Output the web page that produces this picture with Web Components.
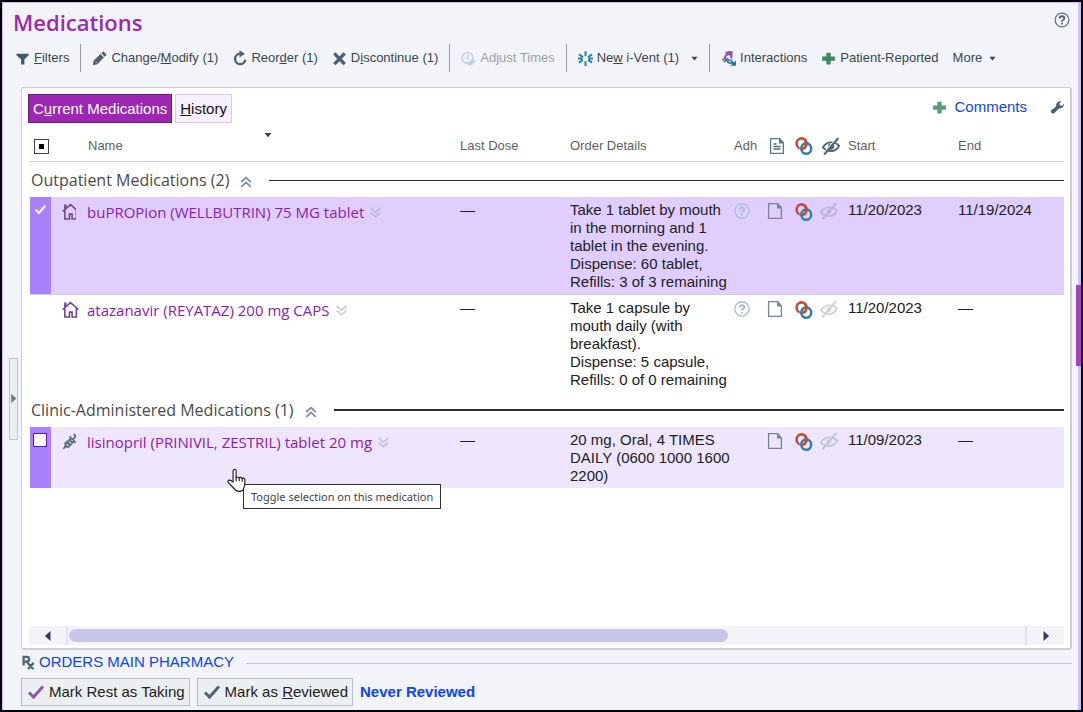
<!DOCTYPE html>
<html lang="en">
<head>
<meta charset="utf-8">
<title>Medications</title>
<style>
  html, body { margin: 0; height: 100%; }
  body { background: #000; font-family: "Liberation Sans", Arial, sans-serif; color: #212121; }
</style>
</head>
<body>
<med-app></med-app>
<script>
const ICONS = {
  filter: '<path fill="#455a6e" d="M1.500 3h13v1.500l-4.500 4.500v5.500H6.500V9L1.500 4.500z"/>',
  pencil: '<path fill="#4d6070" d="M.8 15.200l1-5L9 3.300 12.700 7l-7 7zM10 2.500l1.500-1.700q.5-.4 1 0L15.200 3.500q.4.500 0 1L13.500 6z"/><path stroke="#cfd6de" stroke-width=".8" d="M3.500 11l2 2"/>',
  reorder: '<path fill="none" stroke="#4d6478" stroke-width="2.600" d="M8.500 3a5.500 5.500 0 1 0 5.700 6.300"/><path fill="#4d6478" d="M8-.8l5.800 3.800L8 6.800z"/>',
  cross: '<path stroke="#4a6073" stroke-width="3.600" d="M2.500 2.500l11 11.500M13.500 2.500L2.500 14"/>',
  clock: '<circle cx="7" cy="7.500" r="5.800" fill="none" stroke="#ccd5df" stroke-width="2"/><path fill="none" stroke="#c0ccd8" stroke-width="1.300" d="M7.500 4v4H5"/><path fill="#b9d2e6" d="M7.500 15.500l.8-3.500 4-4 3.200 3-4 4z"/>',
  spark: '<path stroke="#2685ae" stroke-width="2.200" d="M8 .2v5M8 10.800V16M1 3.500L5.300 6.500M10.700 9.500L15 12.500M15 3.500L10.700 6.500M5.300 9.500L1 12.500M11 8h5M0 8h5"/>',
  interact: '<path fill="none" stroke="#8f55ad" stroke-width="2.200" d="M11 5a3.600 3.600 0 1 0-6 4.500q2 1 3.500-.5M5 2h4M11 0v8"/><path fill="#8f55ad" d="M4 2l4.500-2L12 0v5z"/><path fill="none" stroke="#3585ad" stroke-width="2" d="M7 7.500a3.200 3.200 0 1 0 5.500 4M8 10h4"/><path fill="none" stroke="#8f55ad" stroke-width="1.500" d="M1.500 8l3 4"/><path fill="#2078a5" d="M9.500 15.800H16V10l-2 2-2-1.500-1.500 2 1.500 1.500z"/>',
  plus: '<path fill="#3b8a62" d="M5.700 1.800h4.600v4h4.500v4.500h-4.500v4.200H5.700v-4.200H1.200V5.800h4.500z"/>',
  help: '<circle cx="8" cy="8" r="6.900" fill="none" stroke="#546e7a" stroke-width="1.200"/><path fill="none" stroke="#4d6478" stroke-width="1.900" d="M5.700 6.500q0-2.300 2.300-2.300t2.300 2q0 1.200-1.200 1.800T8 9.800M8 11v1.600"/>',
  adh: '<circle cx="8" cy="8" r="7.200" fill="none" stroke="#a9c2d4" stroke-width="1.400"/><path fill="none" stroke="#a9bfd0" stroke-width="2" d="M6 6.500q0-2.200 2-2.200t2.200 1.900q0 1.100-1.100 1.700T8 9.600M8 11v1.600"/>',
  wrench: '<path fill="#4d6070" d="M1 12l6-4.700Q6.500 4 8.500 2.500t4.500-1L10.800 4l.7 2.200 2.300.3L15.700 4q.5 2.500-1.200 4.200T10.300 9.800l-5.300 5q-1.200 1-2.800.2Q.2 13.500 1 12z"/>',
  note: '<path fill="#fff" stroke="#607786" stroke-width="1.300" d="M1.600.7h9l3.800 4v10.600H1.600z"/><path fill="#607786" d="M10 .5l4.800 5H10z"/><path stroke="#546e7a" stroke-width="1.300" d="M4.500 6h3M4.500 8.500h7M4.500 11h7"/>',
  page: '<path fill="none" stroke="#738696" stroke-width="1.300" d="M1.600.7h9l3.800 4v10.600H1.600z"/><path fill="#738696" d="M10 .5l4.800 5H10z"/>',
  links: '<ellipse cx="5.800" cy="5.800" rx="4.400" ry="4.600" fill="none" stroke="#c94b35" stroke-width="2.300"/><ellipse cx="10" cy="10.300" rx="4.400" ry="4.600" fill="none" stroke="#fff" stroke-opacity=".6" stroke-width="3.200"/><ellipse cx="10" cy="10.300" rx="4.400" ry="4.600" fill="none" stroke="#2f80ab" stroke-width="2.300"/><path fill="none" stroke="#c94b35" stroke-width="2.300" d="M8.500 2.200q2.600 2.500 1.300 5.500T6 10.400"/>',
  hidden: '<path fill="none" stroke="#526775" stroke-width="1.700" d="M.8 9.300Q3.500 4.800 8 4.800t7.200 3q-2.500 4.700-7 4.700T.8 9.300z"/><circle cx="8" cy="8.500" r="2.800" fill="#526775"/><path stroke="#fff" stroke-width="1" d="M1 14.500L13 1"/><path stroke="#526775" stroke-width="2" d="M2 15.500L14.500 1"/>',
  hiddenoff: '<g opacity=".42"><path fill="none" stroke="#8f97ab" stroke-width="1.700" d="M.8 9.300Q3.500 4.800 8 4.800t7.200 3q-2.500 4.700-7 4.700T.8 9.300z"/><circle cx="8" cy="8.500" r="2" fill="#8f97ab"/><path stroke="#8f97ab" stroke-width="1.900" d="M2 15.500L14.500 1"/></g>',
  home: '<path fill="none" stroke="#70448f" stroke-width="1.500" d="M.7 8L8 1.500 15.300 8M2.700 7v8H7v-4.500h2.500V15h4V7"/><path fill="#70448f" d="M2 1.500h2.300v3L2 6z"/>',
  syringe: '<path fill="#5b7280" d="M.3 15.800l2.200-4.600L2 9.500 8 4.500l3.800 3.800L6.500 14l-2-.3z"/><path fill="none" stroke="#5b7280" stroke-width="1.700" d="M7 3.200L13 9.200M10 6.200L13 3.200M11 1l4.200 4.200"/><path stroke="#d6dce8" stroke-width="1.100" d="M4.500 10.500L6 12M6.500 8L8.500 10M9 6.500l1 1"/>',
  up2: '<path fill="none" stroke="#7d8d9b" stroke-width="2" d="M2.500 8L8 3l5.500 5M2.500 13.500L8 8.500l5.500 5"/>',
  down2: '<path fill="none" stroke="#9aa3b8" stroke-opacity=".5" stroke-width="2.200" d="M2 2.500l6 5 6-5M2 8l6 5 6-5"/>',
  rx: '<path fill="none" stroke="#4d6478" stroke-width="2.600" d="M3 12V2.200H6.500q2.800 0 2.800 2.600T6.500 7.500H3M6 7.500l8 8.500M14.500 9l-6.500 7"/>',
  check: '<path fill="none" stroke="currentColor" stroke-width="3" d="M1 8.500L5.500 13 15 2.500"/>',
  down: '<path fill="#37474f" d="M1 4h14L8 12.500z"/>',
  right: '<path fill="#3a3858" d="M4 0l9 8-9 8z"/>',
  left: '<path fill="#3a3858" d="M12 0L3 8l9 8z"/>',
  handle: '<path fill="#757575" d="M4 0l9 8-9 8z"/>',
  hand: '<path fill="#fff" stroke="#1b1b26" stroke-width=".9" stroke-linejoin="round" d="M4.800 10.500V1.900Q4.800.6 6 .6T7.200 1.900v5.200q1.200-.9 2.400.3 1.200-.8 2.300.4 1.600-.5 2.200.9v3.800Q14 14 13 16l-.3 1.200Q9.500 19 6.800 17.200L1 11q-.7-1.500.6-1.800Q3 9 4.800 10.800z"/><path stroke="#1b1b26" stroke-width=".9" d="M7.200 7v3M9.600 7.500V10M12 8v2.500"/>'
};

class UiIcon extends HTMLElement {
  connectedCallback() {
    const name = this.getAttribute('name');
    const box = name === 'hand' ? '0 0 15 19' : '0 0 16 16';
    this.attachShadow({ mode: 'open' }).innerHTML = `
      <style>
        :host { display: inline-block; flex: none; width: var(--size, 16px); height: var(--size, 16px); }
        svg { display: block; width: 100%; height: 100%; overflow: visible; }
      </style>
      <svg viewBox="${box}" aria-hidden="true">${ICONS[name]}</svg>`;
  }
}
customElements.define('ui-icon', UiIcon);

class ToolButton extends HTMLElement {
  connectedCallback() {
    const icon = this.getAttribute('icon');
    this.attachShadow({ mode: 'open' }).innerHTML = `
      <style>
        :host { display: block; }
        button { display: flex; align-items: center; gap: 4px; padding: 0; border: 0; background: none;
          font: 13px/16px "Liberation Sans", Arial, sans-serif; color: #37474f; white-space: nowrap; }
        button:disabled { color: #a0a0a0; }
        .icon { --size: 15px; }
        .arrow { --size: 7px; margin-left: 3px; }
        .far .arrow { margin-left: 8px; }
      </style>
      <button ${this.hasAttribute('disabled') ? 'disabled' : ''} class="${this.getAttribute('menu') || ''}">
        ${icon ? `<ui-icon class="icon" name="${icon}"></ui-icon>` : ''}
        <span><slot></slot></span>
        ${this.hasAttribute('menu') ? '<ui-icon class="arrow" name="down"></ui-icon>' : ''}
      </button>`;
  }
}
customElements.define('tool-button', ToolButton);

class ToolBar extends HTMLElement {
  connectedCallback() {
    this.attachShadow({ mode: 'open' }).innerHTML = `
      <style>
        :host { display: flex; align-items: center; gap: 14px; height: 28px; padding-left: 12px; }
        ::slotted(hr) { width: 1px; height: 28px; margin: 0 -3px; border: 0; background: #9a9a9a; flex: none; }
      </style>
      <slot></slot>`;
  }
}
customElements.define('tool-bar', ToolBar);

class TabButton extends HTMLElement {
  connectedCallback() {
    this.attachShadow({ mode: 'open' }).innerHTML = `
      <style>
        :host { display: block; }
        button { height: 29px; padding: 0 4px; border: 1px solid #dfc4fa; background: #f9f0fd; color: #111;
          font: 15px/20px "Liberation Sans", Arial, sans-serif; white-space: nowrap; }
        :host([selected]) button { background: #9c27b0; border-color: #6a1b80; color: #fff; }
      </style>
      <button role="tab"><slot></slot></button>`;
  }
}
customElements.define('tab-button', TabButton);

class ToolTip extends HTMLElement {
  connectedCallback() {
    this.attachShadow({ mode: 'open' }).innerHTML = `
      <style>
        :host { display: block; box-sizing: border-box; height: 25px; padding: 0 7px; border: 1px solid #333;
          background: #fff; color: #444; font: 11px/23px "Noto Sans", "Open Sans", sans-serif; white-space: nowrap; }
      </style>
      <slot></slot>`;
  }
}
customElements.define('tool-tip', ToolTip);

const GROUPS = [
  { title: 'Outpatient Medications (2)', rows: [
    { state: 'selected', icon: 'home', name: 'buPROPion (WELLBUTRIN) 75 MG tablet', adh: true,
      details: ['Take 1 tablet by mouth in the morning and 1 tablet in the evening.', 'Dispense: 60 tablet, Refills: 3 of 3 remaining'],
      start: '11/20/2023', end: '11/19/2024' },
    { state: '', icon: 'home', name: 'atazanavir (REYATAZ) 200 mg CAPS', adh: true,
      details: ['Take 1 capsule by mouth daily (with breakfast).', 'Dispense: 5 capsule, Refills: 0 of 0 remaining'],
      start: '11/20/2023', end: '—' } ] },
  { title: 'Clinic-Administered Medications (1)', rows: [
    { state: 'hovered', icon: 'syringe', name: 'lisinopril (PRINIVIL, ZESTRIL) tablet 20 mg', adh: false,
      details: ['20 mg, Oral, 4 TIMES DAILY (0600 1000 1600 2200)'],
      start: '11/09/2023', end: '—' } ] }
];

class MedTable extends HTMLElement {
  connectedCallback() {
    const row = r => `
      <tr class="med ${r.state}">
        <td class="pick">${r.state ? `<input type="checkbox" aria-label="Select ${r.name}" ${r.state === 'selected' ? 'checked' : ''}>` : ''}${r.state === 'selected' ? '<ui-icon class="tick" name="check"></ui-icon>' : ''}</td>
        <td class="kind"><ui-icon name="${r.icon}"></ui-icon></td>
        <td class="name"><a href="#">${r.name}</a><ui-icon class="more" name="down2"></ui-icon>${r.state === 'hovered' ? '<ui-icon class="hand" name="hand"></ui-icon><tool-tip>Toggle selection on this medication</tool-tip>' : ''}</td>
        <td>—</td>
        <td>${r.details.map(d => `<div>${d}</div>`).join('')}</td>
        <td class="ico">${r.adh ? '<ui-icon name="adh"></ui-icon>' : ''}</td>
        <td class="ico"><ui-icon class="doc" name="page"></ui-icon></td>
        <td class="ico"><ui-icon class="links" name="links"></ui-icon></td>
        <td class="ico"><ui-icon class="eye" name="hiddenoff"></ui-icon></td>
        <td>${r.start}</td>
        <td>${r.end}</td>
      </tr>`;
    this.attachShadow({ mode: 'open' }).innerHTML = `
      <style>
        :host { display: block; }
        table { width: 100%; table-layout: fixed; border-collapse: separate; border-spacing: 0; }
        th, td { padding: 0; text-align: left; vertical-align: top; }
        thead th { height: 30px; vertical-align: middle; border-bottom: 1px solid #ccc; position: relative;
          font-size: 13px; line-height: 16px; font-weight: normal; color: #616161; }
        thead ui-icon { display: block; }
        .sort { position: absolute; left: 50%; top: 0; --size: 8px; margin-left: -4px; }
        tbody th { font-weight: normal; }
        .group { display: flex; align-items: center; height: 34px; margin-top: 1px; padding-left: 1px;
          font: 16px/20px "Open Sans", sans-serif; color: #4a4a4a; white-space: nowrap; }
        .group ui-icon { --size: 14px; margin: 3px 16px 0 10px; }
        .group i { flex: 1; height: 1px; background: #2b2b2b; }
        tbody + tbody .group { margin-top: 0; }
        tbody + tbody .group i { height: 2px; }
        .med td { padding: 4px 0 3px; border-bottom: 1px solid transparent; font-size: 15px; line-height: 18px; color: #212121; }
        .med.selected td { background: #dfceff; border-color: #cfcfdc; }
        .med.hovered td { background: #eee6ff; border-bottom: 0; }
        .med.selected .pick, .med.hovered .pick { background: #aa80ff; }
        .pick { position: relative; }
        input { appearance: none; display: block; box-sizing: border-box; width: 14px; height: 14px; margin: 2px 0 0 3px;
          border: 1px solid #5a14d8; background: #fff; }
        input:checked { border: 0; background: none; }
        .tick { position: absolute; left: 5px; top: 7px; --size: 11px; color: #fff; }
        #all { width: 15px; height: 15px; margin: 0 0 0 4px; border: 1px solid #444; background: #000 content-box; padding: 4px; }
        .kind ui-icon { display: block; margin: 2px 0 0 11px; --size: 17px; }
        .med .name { position: relative; padding: 5px 0 0 11px; font: 15px/20px "Open Sans", sans-serif; white-space: nowrap; }
        thead .name { padding-left: 12px; }
        a { color: #8a1bb4; text-decoration: none; }
        .more { --size: 13px; margin-left: 5px; vertical-align: -1px; }
        .ico ui-icon { display: block; margin-top: 2px; }
        .links { --size: 18px; margin-left: 3px; }
        .ico .eye { margin-top: 1px; }
        .eye { --size: 18px; }
        .doc { margin-left: 3px; }
        thead .doc { margin-left: 5px; }
        thead .eye { margin-left: 2px; }
        .hand { position: absolute; left: 151px; top: 41px; width: 19px; height: 25px; z-index: 1; }
        tool-tip { position: absolute; left: 167px; top: 57px; }
      </style>
      <table>
        <colgroup>
          <col style="width:21px"><col style="width:25px"><col><col style="width:110px"><col style="width:164px">
          <col style="width:30px"><col style="width:28px"><col style="width:28px"><col style="width:28px">
          <col style="width:110px"><col style="width:106px">
        </colgroup>
        <thead><tr>
          <th><input id="all" type="checkbox" aria-label="Select all"></th><th></th>
          <th class="name">Name<ui-icon class="sort" name="down"></ui-icon></th>
          <th>Last Dose</th><th>Order Details</th><th>Adh</th>
          <th><ui-icon class="doc" name="note"></ui-icon></th>
          <th><ui-icon class="links" name="links"></ui-icon></th>
          <th><ui-icon class="eye" name="hidden"></ui-icon></th>
          <th>Start</th><th>End</th>
        </tr></thead>
        ${GROUPS.map(g => `<tbody>
          <tr><th colspan="11"><div class="group">${g.title}<ui-icon name="up2"></ui-icon><i></i></div></th></tr>
          ${g.rows.map(row).join('')}</tbody>`).join('')}
      </table>`;
  }
}
customElements.define('med-table', MedTable);

class ScrollStrip extends HTMLElement {
  connectedCallback() {
    this.attachShadow({ mode: 'open' }).innerHTML = `
      <style>
        :host { display: flex; height: 19px; background: #f3f4fa; }
        button { width: 37px; padding: 0; border: 0; background: none; display: flex; align-items: center; justify-content: center; --size: 10px; }
        .track { flex: 1; display: flex; align-items: center; padding: 0 1px; border: solid #e3e0f5; border-width: 0 2px; }
        .thumb { width: 69%; height: 13px; border-radius: 7px; background: #c7c6ea; }
      </style>
      <button aria-label="Scroll left"><ui-icon name="left"></ui-icon></button>
      <div class="track"><div class="thumb"></div></div>
      <button aria-label="Scroll right"><ui-icon name="right"></ui-icon></button>`;
  }
}
customElements.define('scroll-strip', ScrollStrip);

class MedPanel extends HTMLElement {
  connectedCallback() {
    this.attachShadow({ mode: 'open' }).innerHTML = `
      <style>
        :host { display: flex; flex-direction: column; box-sizing: border-box; flex: 1; padding: 6px 6px 3px 7px;
          border: solid #cdcdd3; border-width: 1px 2px 2px 1px; border-radius: 3px; background: #fff; }
        .tabs { display: flex; align-items: center; gap: 3px; margin-left: -1px; }
        .links { margin-left: auto; display: flex; align-items: center; gap: 7px; height: 26px; align-self: flex-start; }
        a { color: #0b45f5; text-decoration: none; font-size: 15px; line-height: 20px; }
        .plus { --size: 15px; opacity: .85; }
        .wrench { --size: 14px; margin-left: 16px; }
        med-table { margin: 8px 0 0 1px; flex: 1; }
      </style>
      <div class="tabs" role="tablist">
        <tab-button selected>C<u>u</u>rrent Medications</tab-button>
        <tab-button><u>H</u>istory</tab-button>
        <div class="links"><ui-icon class="plus" name="plus"></ui-icon><a href="#">Comments</a><ui-icon class="wrench" name="wrench"></ui-icon></div>
      </div>
      <med-table></med-table>
      <scroll-strip></scroll-strip>`;
  }
}
customElements.define('med-panel', MedPanel);

class MedFooter extends HTMLElement {
  connectedCallback() {
    this.attachShadow({ mode: 'open' }).innerHTML = `
      <style>
        :host { display: block; padding: 2px 0 4px; }
        .pharmacy { display: flex; align-items: center; height: 20px; }
        .pharmacy ui-icon { --size: 14px; margin-right: 4px; }
        .pharmacy i { flex: 1; height: 1px; margin: 3px 0 0 12px; background: #c5c8cf; }
        a { color: #0b45f5; text-decoration: none; font-size: 15px; line-height: 20px; }
        .actions { display: flex; align-items: center; gap: 7px; margin-top: 6px; }
        button { display: flex; align-items: center; gap: 5px; height: 28px; padding: 0 4px 0 6px; border: 1px solid #b9c0c4;
          background: #eceff1; color: #212121; font: 15px/20px "Liberation Sans", Arial, sans-serif; white-space: nowrap; }
        .purple { color: #8f55ad; }
        .slate { color: #4d6478; }
      </style>
      <div class="pharmacy"><ui-icon name="rx"></ui-icon><a href="#">ORDERS MAIN PHARMACY</a><i></i></div>
      <div class="actions">
        <button><ui-icon class="purple" name="check"></ui-icon><span>Mark Rest as Taking</span></button>
        <button><ui-icon class="slate" name="check"></ui-icon><span>Mark as <u>R</u>eviewed</span></button>
        <a href="#"><b>Never Reviewed</b></a>
      </div>`;
  }
}
customElements.define('med-footer', MedFooter);

class MedApp extends HTMLElement {
  connectedCallback() {
    this.attachShadow({ mode: 'open' }).innerHTML = `
      <style>
        :host { display: flex; flex-direction: column; box-sizing: border-box; min-height: 100vh; border: 2px solid #000; position: relative; }
        .frame { flex: 1; display: flex; flex-direction: column; background: #f3f4fa; border: solid #d3bdfb; border-width: 1px 3px 0 1px; }
        header { display: flex; align-items: center; justify-content: space-between; height: 37px; padding: 0 8px 4px 10px; }
        h1 { margin: 0; font: 600 22px/28px "Open Sans", sans-serif; color: #9c27b0; }
        .help { padding: 0; border: 0; background: none; display: block; }
        .body { flex: 1; display: flex; margin-top: 15px; padding-right: 6px; }
        .gutter { width: 18px; display: flex; align-items: center; padding-left: 6px; box-sizing: border-box; }
        .gutter button { width: 9px; height: 82px; padding: 0; border: 1px solid #bfc4c9; background: #eceff1; display: flex; align-items: center; justify-content: center; --size: 9px; }
        main { flex: 1; min-width: 0; display: flex; flex-direction: column; }
        .marker { position: absolute; right: 0; top: 40%; width: 5px; height: 81px; background: #ab3fc4; }
      </style>
      <div class="frame">
        <header><h1>Medications</h1><button class="help" aria-label="Help"><ui-icon name="help"></ui-icon></button></header>
        <tool-bar>
          <tool-button icon="filter"><u>F</u>ilters</tool-button>
          <hr>
          <tool-button icon="pencil">Change/<u>M</u>odify (1)</tool-button>
          <tool-button icon="reorder">Reor<u>d</u>er (1)</tool-button>
          <tool-button icon="cross">D<u>i</u>scontinue (1)</tool-button>
          <hr>
          <tool-button icon="clock" disabled>Adjust Times</tool-button>
          <hr>
          <tool-button icon="spark" menu="far">Ne<u>w</u> i-Vent (1)</tool-button>
          <hr>
          <tool-button icon="interact">Interactions</tool-button>
          <tool-button icon="plus">Patient-Reported</tool-button>
          <tool-button menu="near">More</tool-button>
        </tool-bar>
        <div class="body">
          <div class="gutter"><button aria-label="Expand pane"><ui-icon name="handle"></ui-icon></button></div>
          <main><med-panel></med-panel><med-footer></med-footer></main>
        </div>
      </div>
      <div class="marker"></div>`;
  }
}
customElements.define('med-app', MedApp);
</script>
</body>
</html>
